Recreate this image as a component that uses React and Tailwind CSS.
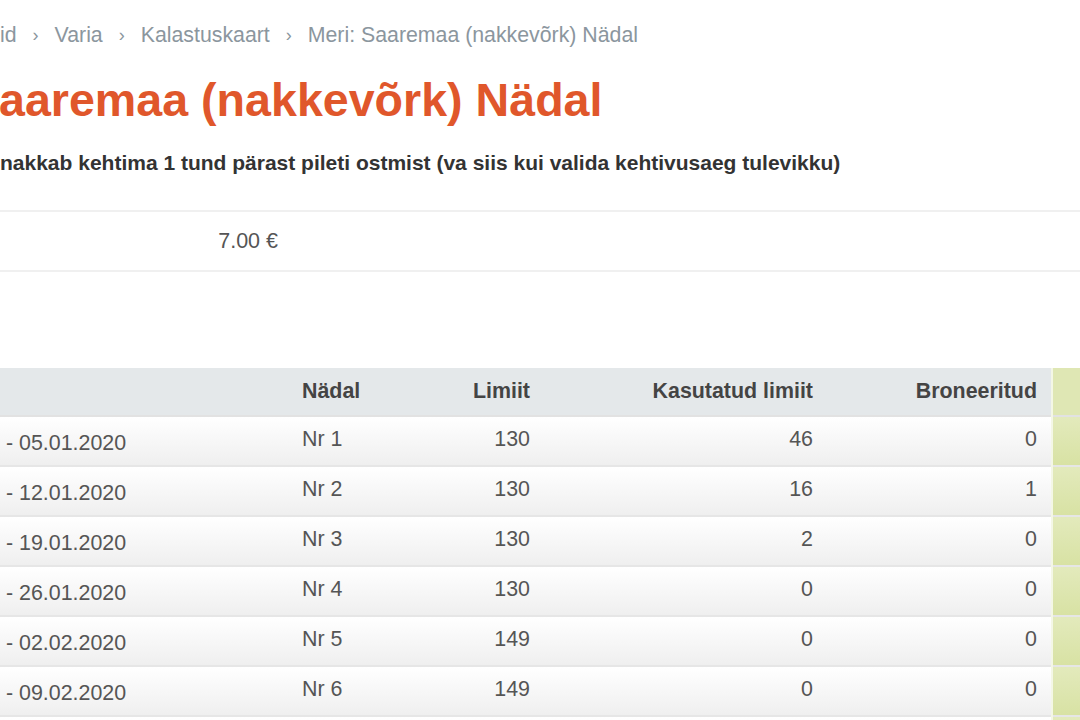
const rows = [
  { date: '- 05.01.2020', week: 'Nr 1', limit: 130, used: 46, booked: 0 },
  { date: '- 12.01.2020', week: 'Nr 2', limit: 130, used: 16, booked: 1 },
  { date: '- 19.01.2020', week: 'Nr 3', limit: 130, used: 2, booked: 0 },
  { date: '- 26.01.2020', week: 'Nr 4', limit: 130, used: 0, booked: 0 },
  { date: '- 02.02.2020', week: 'Nr 5', limit: 149, used: 0, booked: 0 },
  { date: '- 09.02.2020', week: 'Nr 6', limit: 149, used: 0, booked: 0 },
]

const crumbs = ['id', 'Varia', 'Kalastuskaart', 'Meri: Saaremaa (nakkevõrk) Nädal']

export default function App() {
  return (
    <div className="w-[1080px] h-[720px] overflow-hidden bg-white font-['Liberation_Sans',Arial,sans-serif]">
      {/* Breadcrumb */}
      <nav className="h-[70px] pt-[21px] flex items-start text-[21.3px] leading-[28px] text-[#8b969e]">
        {crumbs.map((c, i) => (
          <span key={c} className="flex items-center">
            {i > 0 && <span className="px-[16px] text-[18px]">›</span>}
            <span>{c}</span>
          </span>
        ))}
      </nav>

      {/* Title */}
      <h1 className="h-[62px] text-[46.6px] leading-[60px] font-bold text-[#e0572b] -ml-[1px]">
        aaremaa (nakkevõrk) Nädal
      </h1>

      <p className="h-[78px] pt-[19px] text-[21px] leading-[24px] font-bold text-[#333]">
        nakkab kehtima 1 tund pärast pileti ostmist (va siis kui valida kehtivusaeg tulevikku)
      </p>

      {/* Price row */}
      <div className="h-[62px] border-y-2 border-[#f0f0f0] flex items-center">
        <span className="w-[278px] text-right text-[21.5px] text-[#555]">7.00 €</span>
      </div>

      {/* Weeks table */}
      <div className="mt-[96px] w-[1110px]">
        <table className="table-fixed w-[1110px] border-collapse text-[21.4px] text-[#555]">
          <colgroup>
            <col className="w-[290px]" />
            <col className="w-[130px]" />
            <col className="w-[122px]" />
            <col className="w-[283px]" />
            <col className="w-[227px]" />
            <col className="w-[58px]" />
          </colgroup>
          <thead>
            <tr className="h-[48px] border-b-2 border-[#e2e2e2]">
              <th className="bg-[#e4e8ea]"></th>
              <th className="bg-[#e4e8ea] text-left pl-[12px] font-bold text-[#444]">Nädal</th>
              <th className="bg-[#e4e8ea] text-right pr-[12px] font-bold text-[#444]">Limiit</th>
              <th className="bg-[#e4e8ea] text-right pr-[12px] font-bold text-[#444]">Kasutatud limiit</th>
              <th className="bg-[#e4e8ea] text-right pr-[14px] font-bold text-[#444]">Broneeritud</th>
              <th className="bg-[#dfe7b4] border-l-2 border-[#f4f7e6]"></th>
            </tr>
          </thead>
          <tbody>
            {rows.map((r) => (
              <tr key={r.week} className="h-[50px] border-b-2 border-[#e6e6e6]">
                <td className="bg-gradient-to-b from-white to-[#efefef] pl-[6px] pt-[4px]">{r.date}</td>
                <td className="bg-gradient-to-b from-white to-[#efefef] pl-[12px] pb-[4px]">{r.week}</td>
                <td className="bg-gradient-to-b from-white to-[#efefef] text-right pr-[12px] pb-[4px]">{r.limit}</td>
                <td className="bg-gradient-to-b from-white to-[#efefef] text-right pr-[12px] pb-[4px]">{r.used}</td>
                <td className="bg-gradient-to-b from-white to-[#efefef] text-right pr-[14px] pb-[4px]">{r.booked}</td>
                <td className="bg-gradient-to-b from-[#e3eabc] to-[#d8e2a4] border-l-2 border-[#f4f7e6]"></td>
              </tr>
            ))}
            <tr className="h-[50px]">
              <td colSpan={5} className="bg-gradient-to-b from-white to-[#efefef]"></td>
              <td className="bg-gradient-to-b from-[#e3eabc] to-[#d8e2a4] border-l-2 border-[#f4f7e6]"></td>
            </tr>
          </tbody>
        </table>
      </div>
    </div>
  )
}
